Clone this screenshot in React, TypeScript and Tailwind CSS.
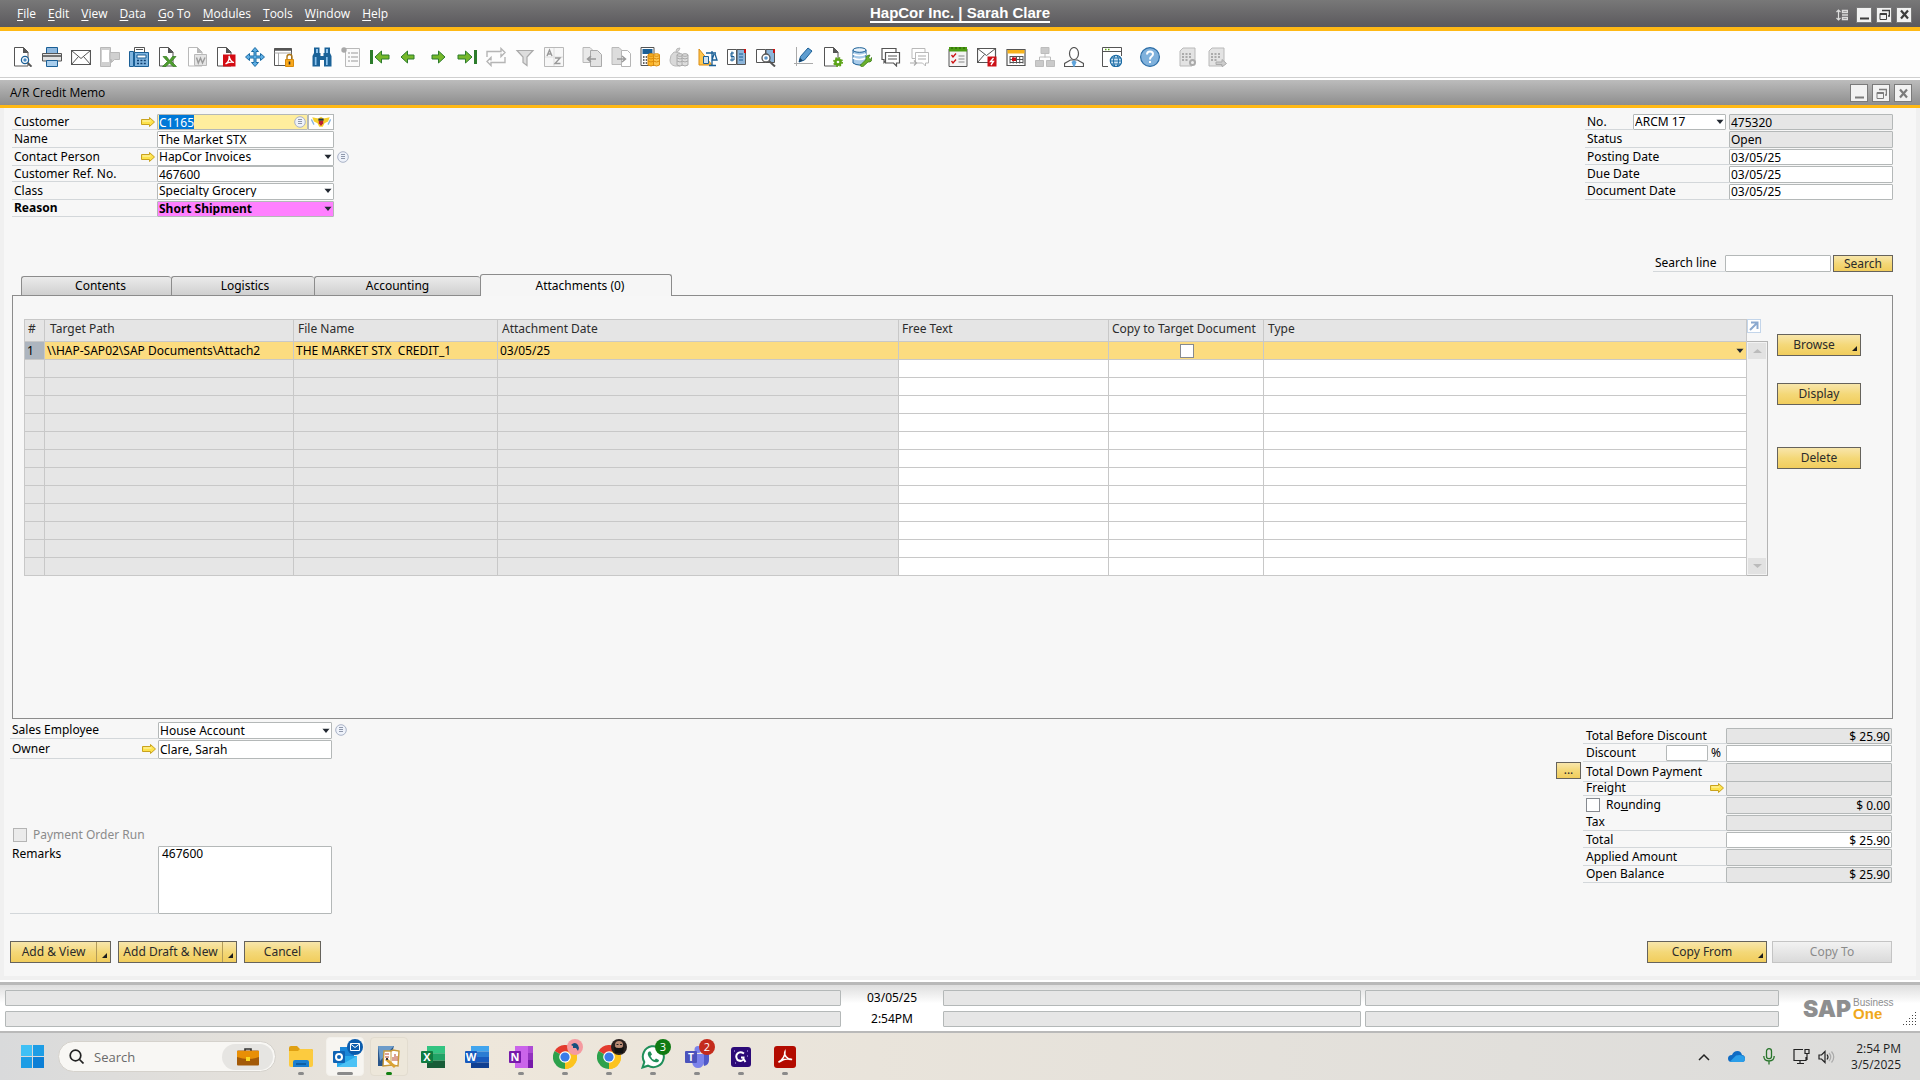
import React, { useEffect, useRef } from "react";

const G = "#b9b9b9";
const D = "#555555";
const B = "#1a5f96";

/* ---------- toolbar drawings, all on a 20 x 20 grid ---------- */

const Page = ({ c = D, f = "#fff" }: { c?: string; f?: string }) => (
  <g>
    <path d="M1.5 .5h9l4.500 4.500v14h-13.500z" fill={f} stroke={c} />
    <path d="M10 0v6h5.500z" fill={c} />
  </g>
);

const Coins = ({ x, c, f }: { x: number; c: string; f: string }) => (
  <g fill={f} stroke={c}>
    <path d={`M${x} 8v10q3 2 6 0v-10z`} />
    <path d={`M${x} 11q3 2 6 0M${x} 14q3 2 6 0`} fill="none" />
    <ellipse cx={x + 3} cy="8" rx="3" ry="1.3" />
  </g>
);

const Arrow = ({ d }: { d: string }) => <path d={d} fill="#76b82a" stroke="#2c7c2c" strokeLinejoin="round" />;

const toolGroups: { name: string; art: React.ReactNode }[][] = [
  [
    { name: "Preview", art: <><Page /><circle cx="12" cy="13" r="3.6" fill="#fff" stroke={B} strokeWidth="1.3" /><circle cx="12" cy="13" r="1.7" fill="#4b8cc4" /><path d="M14.8 16l3.7 3.6" stroke={D} strokeWidth="2" /></> },
    { name: "Print", art: <><path d="M4.5.5h11v6h-11z" fill="#8fb8de" stroke={B} /><path d="M.5 6.500h19v7.500H.5z" fill="#e2e2e2" stroke={D} /><path d="M1 9h18" stroke={D} strokeWidth="1.6" /><path d="M4.5 13.5h11v6h-11z" fill="#a8cdec" stroke={B} /></> },
    { name: "E-mail", art: <><path d="M.5 3.5h19v14H.5z" fill="#fff" stroke={D} strokeWidth="1.2" /><path d="M.5 3.5l9.5 8 9.5-8M.5 17.5l7-8M19.5 17.5l-7-8" fill="none" stroke={D} /></> },
    { name: "SMS", art: <><path d="M.5.5h10v19H.5z" fill="#d0d0d0" stroke={G} /><path d="M2 3h7v12H2z" fill="#fff" /><path d="M10 5.5h9.500v7h-5l-3 3v-3H10z" fill="#d0d0d0" stroke={G} /></> },
    { name: "Fax", art: <><path d="M5.5.5h10v5h-10z" fill="#fff" stroke={D} /><path d="M7 2.5h7" stroke={D} /><path d="M.5 4.5h4v15h-4zM5.5 5.5h14v14h-14z" fill="#7fb4df" stroke={B} /><path d="M8 8h9v3H8z" fill="#fff" stroke={B} /><path d="M8 13.5h9M8 16.5h9" stroke="#0e3f70" strokeWidth="1.4" strokeDasharray="2 1.4" /></> },
    { name: "Export to Excel", art: <><Page /><path d="M5 9.5h3.5l3 4 3-4H18L13.500 14.500l5 5H15l-3.500-3.500-3.500 3.500H4.500l5-5z" fill="#4f9d2e" stroke="#2f7a1c" strokeWidth=".7" /></> },
    { name: "Export to Word", art: <><Page c={G} /><path d="M7.500 7.500h12v11h-12z" fill="#e4e4e4" stroke={G} /><path d="M9.500 10.500l1.800 5.500 2.200-5 2 5 2.500-5.500" fill="none" stroke="#9a9a9a" strokeWidth="1.400" /></> },
    { name: "Export to PDF", art: <><Page /><path d="M7 7.500h12.500v12H7z" fill="#d40b12" /><path d="M9.500 17c3-2 4-5 3.500-8 1 4 2 6 5 6.500-3-.8-6-.3-8.500 1.500z" fill="none" stroke="#fff" strokeWidth="1.200" /></> },
    { name: "Launch Application", art: <path d="M10 .5l3.500 4H11v4.500h4.500V6.500l4 3.500-4 3.500V11H11v4.500h2.500L10 19.500l-3.500-4H9V11H4.500v2.500L.5 10l4-3.500V9H9V4.500H6.500z" fill="#5fb0e6" stroke="#1d6ca5" /> },
    { name: "Lock Screen", art: <><path d="M.5 1.500h17v17H.5z" fill="#fff" stroke={D} /><path d="M.5 2.500h17" stroke={D} strokeWidth="2.500" /><path d="M.5 6h17M4.500 6v12" stroke="#aaa" /><path d="M13 13v-3a2.500 2.500 0 015 0v3" fill="none" stroke="#b07816" strokeWidth="1.400" /><path d="M11.500 12.500h8v7h-8z" fill="#f9a81c" stroke="#d78a0b" /><path d="M15.500 14.500v3" stroke="#333" strokeWidth="1.600" /></> },
  ],
  [
    { name: "Find", art: <><path d="M2 .5h5.500V6h1v3h3V6h1V.5H18V6l1.500 3v10.500H12V13H8v6.500H.5V9L2 6z" fill="#1a6298" /><path d="M4 2h2v4H4zM14 2h2v4h-2zM2.800 10h1.700v8H2.800zM14 10h1.700v8H14z" fill="#8cc3ee" /></> },
    { name: "Add", art: <><path d="M4.500 1.500h14v18h-14z" fill="#fafafa" stroke={G} /><circle cx="3" cy="3" r="2.700" fill="#a8a8a8" /><path d="M7 6h2M10 6h7M7 10h2M10 10h7M7 14h2M10 14h7" stroke={G} strokeWidth="1.300" /></> },
    { name: "First Record", art: <><path d="M1.500 3v14" stroke="#2c7c2c" strokeWidth="3" /><Arrow d="M5 10l6.500-6v4H19v4h-7.500v4z" /></> },
    { name: "Previous Record", art: <Arrow d="M2 10l6.500-6v4H15v4H8.500v4z" /> },
    { name: "Next Record", art: <Arrow d="M17 10l-6.500-6v4H4v4h6.500v4z" /> },
    { name: "Last Record", art: <><path d="M18.500 3v14" stroke="#2c7c2c" strokeWidth="3" /><Arrow d="M15 10L8.500 4v4H1v4h7.500v4z" /></> },
    { name: "Refresh", art: <path d="M1 10V4.500h14v-3l4 4-4 4v-3M19 10v5.500H5v3l-4-4 4-4v3" fill="none" stroke="#b5b5b5" strokeWidth="1.400" /> },
    { name: "Filter", art: <path d="M2 3.500h16l-6 6.500v8.500l-4-3V10z" fill="#ddd" stroke="#aaa" strokeWidth="1.200" /> },
    { name: "Sort", art: <><path d="M.5.5h19v19H.5z" fill="#f7f7f7" stroke={G} /><path d="M10 1v18M1 10h18" stroke="#ddd" /><path d="M3 9l2.500-6L8 9M4 7h3M11 11h5l-5 5.500h5.500" fill="none" stroke="#999" strokeWidth="1.400" /></> },
  ],
  [
    { name: "Base Document", art: <><path d="M1 .5h7l3 3v12H1z" fill="#e9e9e9" stroke={G} /><path d="M8.500 3.500h7l4 4v12h-11z" fill="#e3e3e3" stroke="#aaa" /><path d="M14 12H6M9 9l-3.500 3L9 15" fill="none" stroke="#999" strokeWidth="1.500" /></> },
    { name: "Target Document", art: <><path d="M1 .5h7l3 3v14H1z" fill="#dcdcdc" stroke={G} /><path d="M10.500 3.500h6l3 3v13h-9z" fill="#fff" stroke="#b5b5b5" /><path d="M6 12h8M11 9l3.500 3-3.500 3" fill="none" stroke="#999" strokeWidth="1.500" /></> },
    { name: "Gross Profit", art: <><path d="M1 .5h13v18H1z" fill="#fff" stroke={D} /><path d="M2.500 2h10v5h-10z" fill={B} /><path d="M3 10h6M3 13h6M3 16h6" stroke="#333" strokeWidth="1.600" strokeDasharray="1.500 1.200" /><Coins x={8} c="#dc8d0d" f="#fbb427" /><Coins x={13.5} c="#dc8d0d" f="#fdc650" /></> },
    { name: "Payment Means", art: <><path d="M5 5q-4 3-4 8t5 6h5V6zM7 4q0-3 4-3-1 4-4 4z" fill="#d9d9d9" stroke={G} /><Coins x={8} c="#aaa" f="#ddd" /><Coins x={13} c="#aaa" f="#ddd" /></> },
    { name: "Volume and Weight", art: <><path d="M1 2l13 16H1z" fill="#ffc64f" stroke="#d98b12" /><path d="M5.500 9.500h5v7h-5z" fill="#cfe3f4" stroke={B} /><path d="M8 6h10M14 4v14M11 18.500h7M16 7l-2 6h5l-2-6" fill="none" stroke={B} strokeWidth="1.300" /></> },
    { name: "Transaction Journal", art: <><path d="M.5 2.500h9v15h-9z" fill="#fff" stroke={D} /><path d="M10 2.500h8.500v15H10z" fill="#8db5da" stroke={D} /><path d="M17 2h2v4h-2z" fill="#c11" /><path d="M7 6H4v3.500h3V13H3M5 4.500v10M12 7h4M12 10h4M12 13h4" fill="none" stroke={B} /></> },
    { name: "Journal Preview", art: <><path d="M.5 2.500h9v13h-9z" fill="#fff" stroke={D} /><path d="M10 2.500h8.500v13H10z" fill="#8db5da" stroke={D} /><path d="M17 2h2v4h-2z" fill="#c11" /><circle cx="10" cy="11" r="4" fill="#fff" stroke={D} strokeWidth="1.300" /><circle cx="10" cy="11" r="1.800" fill="#5b95c8" /><path d="M13 14l6 5.500" stroke={D} strokeWidth="2" /></> },
  ],
  [
    { name: "Layout Designer", art: <><path d="M2.500 0v19M0 16.500h19" stroke="#aaa" /><path d="M5 15l1.500-5.500L14 1l4 3-7.500 9z" fill="#5e9dd0" stroke={B} /><path d="M5 15l1-4 3 2.500z" fill="#173f63" /></> },
    { name: "Form Settings", art: <><Page /><circle cx="15" cy="15" r="2.600" fill="#fff" stroke="#5aa315" strokeWidth="2.500" /><circle cx="15" cy="15" r="4.200" fill="none" stroke="#5aa315" strokeWidth="1.600" strokeDasharray="1.700 1.600" /></> },
    { name: "Query Manager", art: <><path d="M1 3v13q6 4 13 0V3z" fill="#a8cbe9" stroke={B} /><ellipse cx="7.500" cy="3" rx="6.500" ry="2.300" fill="#e9f3fb" stroke={B} /><path d="M1 7q6 3 13 0M1 11q6 3 13 0" fill="none" stroke="#fff" strokeWidth="1.600" /><path d="M8 18.500l6-6q-1-4 4-4.500l-1.500 3 2 1.500 1-2q1 5-3.500 4.500l-5.500 5z" fill="#6cb02b" stroke="#3a7d18" strokeWidth=".8" /></> },
    { name: "Messages", art: <><path d="M1 1.500h14v11H6l-3 3v-3H1z" fill="#fff" stroke={D} strokeWidth="1.200" /><path d="M4.500 5.500h14v10.500h-3v3l-3-3h-8z" fill="#fff" stroke={D} strokeWidth="1.200" /><path d="M7 9h9M7 12h9" stroke={D} /></> },
    { name: "Reply", art: <><path d="M2 1.500h13v10H2z" fill="#fff" stroke={G} /><path d="M5.500 5.500h13V16h-3v3l-3-3h-7z" fill="#fff" stroke={G} /><path d="M8 9h8M8 12h8M0 16h6M4 13.500l2.500 2.500L4 18.500" fill="none" stroke="#aaa" strokeWidth="1.200" /></> },
  ],
  [
    { name: "Tasks", art: <><path d="M1 2h18v17.500H1z" fill="#f4f4f4" stroke={D} /><path d="M1 0h18v4.500H1z" fill="#4c9c14" /><path d="M3 1h15" stroke="#235a00" strokeDasharray="2 2" /><path d="M3.500 8l1.500 2 3-3.500M3.500 14l1.500 2 3-3.500" fill="none" stroke="#c11" strokeWidth="1.300" /><path d="M10.500 9h6M10.500 12h6M10.500 15h6" stroke="#888" /></> },
    { name: "Alerts", art: <><path d="M.5 1.500h18v14H.5z" fill="#fff" stroke={D} strokeWidth="1.200" /><path d="M.5 1.500l9 7 9-7M.5 15.500l7-8" fill="none" stroke={D} /><path d="M10.500 9.500h9v10h-9z" fill="#cc1016" /><path d="M16.500 11l-3 3.500h3l-2.500 3.500" fill="none" stroke="#fff" strokeWidth="1.300" /></> },
    { name: "Calendar", art: <><path d="M1 2.500h18v16H1z" fill="#fff" stroke={D} strokeWidth="1.200" /><path d="M1.500 3h17v3.500h-17z" fill="#f7b31b" /><path d="M4 9.500h13M4 12.500h13M4 15.500h13M4 9v7.500M7.200 9v7.500M10.500 9v7.500M13.700 9v7.500M17 9v7.500" stroke={D} /><path d="M6 10.500h4v3.500H6z" fill="#d40b12" /></> },
    { name: "Organization", art: <><path d="M6 .5h8v6H6zM.5 13.500h8v6h-8zM11.500 13.500h8v6h-8z" fill="#cacaca" stroke="#bdbdbd" /><path d="M10 6.500v4M4.500 13v-3h11v3" fill="none" stroke="#bdbdbd" /></> },
    { name: "My Account", art: <><path d="M.5 19.500v-3l6-3.500h7l6 3.500v3z" fill="#fff" stroke={D} strokeWidth="1.200" /><path d="M10 13l2.500 2-2 5h-1l-2-5z" fill="#5ea4dc" /><ellipse cx="10" cy="6.500" rx="4.500" ry="6" fill="#fff" stroke={D} strokeWidth="1.200" /></> },
  ],
  [
    { name: "Browser Access", art: <><path d="M.5.5h19v19H.5z" fill="#fff" /><path d="M6 19.500H.5V.5h19V9M.5 4.500h19" fill="none" stroke={D} /><path d="M3 2.500h1.500M6 2.500h1.500" stroke="#5aa315" strokeWidth="1.500" /><circle cx="14" cy="14" r="5.700" fill="#cfe6f7" stroke="#1d6ca5" strokeWidth="1.200" /><ellipse cx="14" cy="14" rx="2.500" ry="5.700" fill="none" stroke="#1d6ca5" /><path d="M8.500 14h11M9.500 11h9M9.500 17h9" stroke="#1d6ca5" /></> },
  ],
  [
    { name: "Help", art: <><circle cx="10" cy="10" r="9.400" fill="#7fb1dc" stroke="#2c6da6" strokeWidth="1.200" /><path d="M7 7.500q0-3 3-3t3 2.500q0 1.500-1.500 2.500T10 12.500M10 14v2" fill="none" stroke="#fff" strokeWidth="2" /></> },
  ],
  [
    { name: "Server Settings", art: <><path d="M2 4l3-3h12v15l-3 3H2z" fill="#e3e3e3" stroke={G} /><path d="M4 7h9M4 10h9M4 13h7" stroke="#999" strokeDasharray="2 1.500" strokeWidth="1.300" /><circle cx="14.500" cy="15.500" r="2.500" fill="#eee" stroke="#aaa" strokeWidth="2" /></> },
    { name: "Server Send", art: <><path d="M2 4l3-3h12v15l-3 3H2z" fill="#e3e3e3" stroke={G} /><path d="M4 7h9M4 10h9M4 13h7" stroke="#999" strokeDasharray="2 1.500" strokeWidth="1.300" /><path d="M9 15h6v-2.500l4.500 4-4.500 3.500v-2.500H9z" fill="#ccc" stroke="#aaa" /></> },
  ],
];

/* ---------- small shared pieces ---------- */

const LinkArrow = () => (
  <svg width="14" height="10" viewBox="0 0 14 10" className="block shrink-0">
    <path d="M.5 2.500h8v-2l5 4.500-5 4.500v-2h-8z" fill="#fde24a" stroke="#c9a21e" />
    <path d="M1.500 4h8" stroke="#fff6b8" />
  </svg>
);

const LinkButton = ({ label }: { label: string }) => (
  <button type="button" aria-label={label} className="mr-0.5 bg-[#f7f7f7]"><LinkArrow /></button>
);

const ListIcon = () => (
  <svg width="12" height="12" viewBox="0 0 12 12" className="block">
    <circle cx="6" cy="6" r="5.300" fill="#eef2fa" stroke="#a9b2c6" />
    <path d="M4 3.500h4M4 5.500h4M4 7.500h4" stroke="#8f98ab" />
  </svg>
);

const Down = () => (
  <svg width="8" height="5" viewBox="0 0 8 5" className="pointer-events-none absolute top-1/2 right-0.5 -translate-y-1/2">
    <path d="M.3 0h7.400L4 4.500z" fill="#222831" />
  </svg>
);

const box = "block h-full w-full min-w-0 rounded-[1px] border border-[#b4b8b8] px-px leading-none outline-none";

function Field({ id, value = "", gray, right, label }: { id: string; value?: string; gray?: boolean; right?: boolean; label?: string }) {
  return (
    <input
      id={id}
      aria-label={label}
      defaultValue={value}
      readOnly={gray}
      className={`${box} ${gray ? "bg-[#e6e6e6]" : "bg-white"} ${right ? "text-right" : ""}`}
    />
  );
}

function Pick({ id, value, pink, label }: { id: string; value: string; pink?: boolean; label?: string }) {
  return (
    <span className="relative block h-full w-full">
      <select id={id} aria-label={label} className={`${box} appearance-none ${pink ? "bg-[#ff80ff] font-bold" : "bg-white"}`}>
        <option>{value}</option>
      </select>
      <Down />
    </span>
  );
}

function Row({ id, label, labelClass, arrow, bold, extra, children }: {
  id: string; label: React.ReactNode; labelClass: string; arrow?: string; bold?: boolean; extra?: React.ReactNode; children: React.ReactNode;
}) {
  return (
    <div className="flex pt-px">
      <div className={`flex items-center justify-between border-b border-[#d3d7da] ${labelClass}`}>
        <label htmlFor={id} className={`whitespace-nowrap ${bold ? "font-bold" : ""}`}>{label}</label>
        {arrow && <LinkButton label={arrow} />}
        {extra}
      </div>
      <div className="min-w-0 flex-1">{children}</div>
    </div>
  );
}

const gold = "border border-[#66635c] bg-linear-to-b from-[#f8e6ab] via-[#f4d878] to-[#f1cd5c] text-[#2b2b2b]";

const Corner = () => (
  <svg width="5" height="5" viewBox="0 0 5 5" className="absolute right-[3px] bottom-1"><path d="M5 0v5H0z" fill="#1d1d1d" /></svg>
);

function Gold({ children, className, corner, split }: { children: React.ReactNode; className: string; corner?: boolean; split?: boolean }) {
  return (
    <button type="button" className={`flex items-center ${gold} ${className}`}>
      <span className={`flex-1 text-center whitespace-nowrap ${corner && !split ? "pr-2.5" : ""}`}>{children}</span>
      {split && <span className="h-full w-[14px] border-l border-[#b39b58]" />}
      {corner && <Corner />}
    </button>
  );
}

function WinButtons({ size, tone }: { size: string; tone: string }) {
  const cls = `flex items-center justify-center border border-[#7a7a7a] bg-[#f2f2f2] ${size} ${tone}`;
  return (
    <>
      <button type="button" aria-label="Minimize" className={cls}>
        <svg width="11" height="11" viewBox="0 0 11 11"><path d="M1 9.500h9" stroke="currentColor" strokeWidth="2" /></svg>
      </button>
      <button type="button" aria-label="Restore" className={cls}>
        <svg width="11" height="11" viewBox="0 0 11 11" fill="none" stroke="currentColor"><path d="M3 1.500h7.500V7H9" strokeWidth="1.500" /><path d="M1 4.500h6.500v6H1z" /><path d="M1 5h6.500" strokeWidth="2" /></svg>
      </button>
      <button type="button" aria-label="Close" className={cls}>
        <svg width="11" height="11" viewBox="0 0 11 11"><path d="M2 1.500l7 8M9 1.500l-7 8" stroke="currentColor" strokeWidth="2.200" /></svg>
      </button>
    </>
  );
}

/* ---------- attachments table ---------- */

const columns = [
  { t: "#", w: "w-[20px]" },
  { t: "Target Path", w: "w-[249px]" },
  { t: "File Name", w: "w-[204px]" },
  { t: "Attachment Date", w: "w-[401px]" },
  { t: "Free Text", w: "w-[210px]" },
  { t: "Copy to Target Document", w: "w-[155px]" },
  { t: "Type", w: "" },
];

const TypePick = () => (
  <span className="relative block h-4">
    <select aria-label="Type" className="block h-full w-full appearance-none bg-transparent outline-none"><option> </option></select>
    <Down />
  </span>
);

function AttachmentTable() {
  const cell = "h-[18px] border border-[#c8c8c8] p-0 pl-0.5 leading-none whitespace-pre overflow-hidden";
  return (
    <table className="w-full table-fixed border-collapse">
      <thead>
        <tr>
          {columns.map((c, i) => (
            <th key={c.t} scope="col" className={`h-[22px] border border-[#c8c8c8] bg-[#e5e5e5] p-0 text-left font-normal whitespace-nowrap text-[#2c2c2c] ${i === 1 ? "pl-[5px]" : i === 0 || i === 4 || i === 5 ? "pl-[3px]" : "pl-1"} pb-1 ${c.w}`}>{c.t}</th>
          ))}
        </tr>
      </thead>
      <tbody>
        <tr className="bg-[#fcdc80]">
          <td className={`${cell} bg-[#adb5bf]`}>1</td>
          <td className={cell}>{"\\\\HAP-SAP02\\SAP Documents\\Attach2"}</td>
          <td className={cell}>{"THE MARKET STX  CREDIT_1"}</td>
          <td className={cell}>03/05/25</td>
          <td className={cell} />
          <td className={cell}>
            <input type="checkbox" aria-label="Copy to Target Document" className="mx-auto block size-[14px] appearance-none border border-[#868a90] bg-white" />
          </td>
          <td className={cell}><TypePick /></td>
        </tr>
        {Array.from({ length: 12 }, (_, r) => (
          <tr key={r}>
            {columns.map((c, i) => <td key={c.t} className={`${cell} ${i < 4 ? "bg-[#e6e6e6]" : "bg-white"}`} />)}
          </tr>
        ))}
      </tbody>
    </table>
  );
}

/* ---------- taskbar drawings, 24 x 24 ---------- */

const Office = ({ l, c, bars }: { l: string; c: string; bars: string[] }) => (
  <svg width="24" height="24" viewBox="0 0 24 24">
    {bars.map((b, i) => <rect key={i} x="6" y={1 + i * (22 / bars.length)} width="18" height={22 / bars.length} fill={b} />)}
    <rect x="0" y="6" width="12" height="12" rx="1" fill={c} />
    <text x="6" y="16" textAnchor="middle" fontSize="11" fontWeight="700" fill="#fff" fontFamily="Open Sans, sans-serif">{l}</text>
  </svg>
);

const Chrome = () => (
  <svg width="24" height="24" viewBox="0 0 24 24">
    <path d="M12 12L1.600 6A12 12 0 0122.400 6z" fill="#e33b2e" />
    <path d="M12 12l10.400-6A12 12 0 0112 24z" fill="#fcc31e" />
    <path d="M12 12v12A12 12 0 011.600 6z" fill="#2da14c" />
    <path d="M12 6.500h10.600A12 12 0 0112 24l4.800-9.200z" fill="#fcc31e" />
    <circle cx="12" cy="12" r="5.800" fill="#fff" /><circle cx="12" cy="12" r="4.600" fill="#3a7be8" />
  </svg>
);

const Badge = ({ children, className }: { children: React.ReactNode; className: string }) => (
  <span className={`absolute -top-1.5 -right-1.5 flex size-4 items-center justify-center overflow-hidden rounded-full text-[11px] leading-none text-white ${className}`}>{children}</span>
);

const apps: { name: string; art: React.ReactNode; badge?: React.ReactNode; tile?: string; dot?: string }[] = [
  { name: "File Explorer", dot: "w-1.5 bg-[#8a8a8a]", art: <svg width="24" height="24" viewBox="0 0 24 24"><path d="M0 3q0-2 2-2h6l3 3h11q2 0 2 2v14H0z" fill="#e0a012" /><path d="M0 6h9l2-2h11q2 0 2 2v14q0 2-2 2H2q-2 0-2-2z" fill="#fccb3f" /><path d="M4 22v-5q0-2 2-2h12q2 0 2 2v5z" fill="#1b7fd0" /><path d="M7 19h10" stroke="#0b5596" strokeWidth="1.500" /></svg> },
  { name: "Outlook", tile: "border-[#f3f1ec] bg-[#f7f5f1]", dot: "w-4 bg-[#8a8a8a]", badge: <Badge className="bg-[#0b5cad]"><svg width="10" height="8" viewBox="0 0 10 8" fill="none" stroke="#fff"><path d="M.5.5h9v7h-9zM.5 1L5 4.500 9.500 1" /></svg></Badge>, art: <svg width="24" height="24" viewBox="0 0 24 24"><path d="M7 2h14v12H7z" fill="#1a86d8" /><path d="M4 11h20v11H4z" fill="#28a8ea" /><path d="M4 22L24 11v11z" fill="#4cc2f5" /><rect y="6" width="12" height="12" rx="1" fill="#0f64b5" /><circle cx="6" cy="12" r="3" fill="none" stroke="#fff" strokeWidth="2" /></svg> },
  { name: "SAP Business One", tile: "border-[#e2dccf] bg-[#ede7da]", dot: "w-1.5 bg-[#128012]", art: <svg width="24" height="24" viewBox="0 0 24 24"><path d="M1 1h16l-6 20H1z" fill="#2a568a" /><path d="M1 1h16L3 16z" fill="#6d9cc9" /><path d="M7 6h7l2-1 6 1-1 15-6-1-9 1z" fill="#fff" stroke="#c99a3a" strokeWidth="1.400" /><path d="M14 6v14" stroke="#c99a3a" /><path d="M8 9h4M8 12h4M16 12v4M18 9v7M20 11v5" stroke="#b9472c" /><path d="M9 14l9 8" stroke="#dba334" strokeWidth="3" /><path d="M9 14l2 0" stroke="#333" strokeWidth="2" /></svg> },
  { name: "Excel", art: <Office l="X" c="#107c41" bars={["#33c481", "#21a366", "#185c37"]} /> },
  { name: "Word", art: <Office l="W" c="#185abd" bars={["#41a5ee", "#2b7cd3", "#185abd", "#103f91"]} /> },
  { name: "OneNote", dot: "w-1.5 bg-[#8a8a8a]", art: <svg width="24" height="24" viewBox="0 0 24 24"><path d="M6 1h18v22H6z" fill="#ca64ea" /><path d="M19 1h5v7h-5z" fill="#ae4bd5" /><path d="M19 8h5v7h-5z" fill="#9332bf" /><path d="M19 15h5v8h-5z" fill="#7719aa" /><rect y="6" width="12" height="12" rx="1" fill="#7719aa" /><text x="6" y="16" textAnchor="middle" fontSize="11" fontWeight="700" fill="#fff" fontFamily="Open Sans, sans-serif">N</text></svg> },
  { name: "Chrome, first profile", dot: "w-1.5 bg-[#8a8a8a]", art: <Chrome />, badge: <Badge className="bg-[#f59aa0]"><svg width="12" height="12" viewBox="0 0 12 12"><path d="M2 4q4-4 7 0l1 3-1 3-2-3-3 0 0-2z" fill="#17507e" /></svg></Badge> },
  { name: "Chrome, second profile", dot: "w-1.5 bg-[#8a8a8a]", art: <Chrome />, badge: <Badge className="bg-[#2a211f]"><svg width="16" height="16" viewBox="0 0 16 16"><circle cx="8" cy="6" r="4" fill="#b98a74" /><path d="M3 8q5 2 10 0l-1 6H4z" fill="#111" /><path d="M5.500 5.500h2M9 5.500h2" stroke="#222" /></svg></Badge> },
  { name: "WhatsApp", dot: "w-1.5 bg-[#8a8a8a]", badge: <Badge className="bg-[#0f7a12]">3</Badge>, art: <svg width="24" height="24" viewBox="0 0 24 24"><path d="M1.500 22.500l1.800-5.500a10.500 10.500 0 113.700 3.700z" fill="#fff" stroke="#1f8f5a" strokeWidth="2" /><path d="M8 6.500q-3 2 1 7t8 3.500q2-1.500 0-2.500l-2-1-1.500 1.500q-3-1-4-4L11 9.500l-1.500-3z" fill="#1f8f5a" /></svg> },
  { name: "Teams", dot: "w-1.5 bg-[#8a8a8a]", badge: <Badge className="bg-[#c42b1c]">2</Badge>, art: <svg width="24" height="24" viewBox="0 0 24 24"><circle cx="13" cy="4.500" r="3.500" fill="#7b83eb" /><path d="M16 9h8v6q0 5-5 6z" fill="#5059c9" /><path d="M7 9h12v8q-1 6-6 6t-6-6z" fill="#7b83eb" /><rect y="6" width="12" height="12" rx="1" fill="#4b53bc" /><text x="6" y="16" textAnchor="middle" fontSize="10" fontWeight="700" fill="#fff" fontFamily="Open Sans, sans-serif">T</text></svg> },
  { name: "G Hub", dot: "w-1.5 bg-[#8a8a8a]", art: <svg width="20" height="20" viewBox="0 0 20 20"><rect width="20" height="20" rx="3" fill="#2c0a78" /><path d="M13 6.500q-4-2.500-6.500 0t0 6.500q4 2 6-.5V10.500H10M12.500 12l2 3" fill="none" stroke="#fff" strokeWidth="2" /><path d="M3 4h1M16 4h1M4 16h1M16 9h1" stroke="#c9b8ff" /></svg> },
  { name: "Acrobat", dot: "w-1.5 bg-[#8a8a8a]", art: <svg width="22" height="22" viewBox="0 0 22 22"><rect width="22" height="22" rx="3" fill="#b30b00" /><path d="M4.500 16c4-2 7-7 6.500-10.500-1.500 3 2 8.500 7 8-4-1.500-9 0-13 2.500z" fill="none" stroke="#fff" strokeWidth="1.500" /></svg> },
];

const menus = ["File", "Edit", "View", "Data", "Go To", "Modules", "Tools", "Window", "Help"];

const ui = "font-['Noto_Sans',sans-serif]";
const segoe = "font-['Open_Sans','Noto_Sans',sans-serif]";

export default function App() {
  const customer = useRef<HTMLInputElement>(null);
  useEffect(() => {
    customer.current?.focus();
    customer.current?.select();
  }, []);

  const lw = "w-[145px] pl-0.5";
  const tw = "w-[143px] pl-[3px]";
  const pane = "h-4 rounded-[1px] border border-[#b4b8b8] bg-[#e6e6e6]";

  return (
    <div className={`flex min-h-screen flex-col bg-white text-[12px] leading-4 text-black ${ui}`}>
      {/* application bar */}
      <header className="grid h-[31px] grid-cols-[1fr_auto_1fr] items-center border-b-4 border-[#ffb915] bg-linear-to-b from-[#787878] to-[#5b595d]">
        <nav className={`flex gap-3 pl-[17px] text-white ${segoe}`}>
          {menus.map((m) => (
            <button key={m} type="button" className="leading-4"><span className="underline underline-offset-2">{m[0]}</span>{m.slice(1)}</button>
          ))}
        </nav>
        <h1 className="mt-px border-b-2 border-white font-['Liberation_Sans',sans-serif] text-[15px] leading-4 font-bold text-white">HapCor Inc. | Sarah Clare</h1>
        <div className="flex items-center justify-end gap-1 pt-0.5 pr-2">
          <svg width="12" height="12" viewBox="0 0 12 12" className="mr-1" fill="none" stroke="#dcdcdc"><path d="M2.500 1v10M.5 3l2-2 2 2M.5 9l2 2 2-2" strokeWidth="1.200" /><path d="M6.500 1.500h5v2h-5zM6 6h6M6.500 8.500h5v2h-5z" strokeWidth="1.400" /></svg>
          <WinButtons size="h-4 w-4" tone="text-[#3d3d3d]" />
        </div>
      </header>

      {/* toolbar */}
      <div className="mb-0.5 flex h-[47px] items-center gap-[18px] border-b border-[#cfcfcf] bg-[#fdfdfd] pt-[5px] pl-[13px]">
        {toolGroups.map((g, i) => (
          <div key={i} className="flex gap-[9px]">
            {g.map((t) => (
              <button key={t.name} type="button" aria-label={t.name}>
                <svg width="20" height="20" viewBox="0 0 20 20" fill="none" className="block">{t.art}</svg>
              </button>
            ))}
          </div>
        ))}
      </div>

      {/* document window */}
      <div className={`flex h-7 items-center justify-between border-b-[3px] border-[#ffb915] bg-linear-to-b from-[#bcbcbc] to-[#8e8e8e] pt-px pr-2 pl-2.5 ${segoe}`}>
        <h2>A/R Credit Memo</h2>
        <div className="flex gap-1"><WinButtons size="h-[18px] w-[18px]" tone="text-[#7c7c7c]" /></div>
      </div>

      <main className="flex flex-1 flex-col border-x-4 border-b-4 border-[#f0f0f0] bg-[#f7f7f7] pt-[5px] pr-[23px] pb-[13px] pl-1.5">
        <div className="flex items-start justify-between">
          <div className="ml-0.5 grid h-[104px] w-[322px] grid-rows-6">
            <Row id="customer" label="Customer" labelClass={lw} arrow="Open customer">
              <div className="flex h-full">
                <div className="relative flex-1">
                  <input id="customer" ref={customer} defaultValue="C1165" className={`${box} bg-[#ffee9e] selection:bg-[#0078d7] selection:text-white`} />
                  <button type="button" aria-label="Choose customer" className="absolute top-0.5 right-0.5"><ListIcon /></button>
                </div>
                <svg width="26" height="16" viewBox="0 0 26 16" className="border border-[#b4b8b8] bg-white"><path d="M3 2.500l7 1.500 3-2 3 2 7-1.500-2 5-4 2-2 4h-4l-2-4-4-2z" fill="#f6cf2a" /><path d="M10.500 6.500h5v3l-2.500 3-2.500-3z" fill="#b23" /><path d="M10 4h6v2.500h-6z" fill="#234" /><path d="M2 5l3 6M24 5l-3 6" stroke="#8bb7e0" strokeWidth="1.500" /></svg>
              </div>
            </Row>
            <Row id="name" label="Name" labelClass={lw}><Field id="name" value="The Market STX" /></Row>
            <div className="relative grid">
              <Row id="contact" label="Contact Person" labelClass={lw} arrow="Open contact person"><Pick id="contact" value="HapCor Invoices" /></Row>
              <button type="button" aria-label="Contact details" className="absolute top-[3px] left-full ml-[3px]"><ListIcon /></button>
            </div>
            <Row id="ref" label="Customer Ref. No." labelClass={lw}><Field id="ref" value="467600" /></Row>
            <Row id="class" label="Class" labelClass={lw}><Pick id="class" value="Specialty Grocery" /></Row>
            <Row id="reason" label="Reason" labelClass={lw} bold><Pick id="reason" value="Short Shipment" pink /></Row>
          </div>

          <div className="w-[308px]">
            <div className="grid h-[87px] grid-rows-5">
              <Row id="number" label="No." labelClass="w-12 pl-0.5">
                <div className="flex h-full gap-[3px]">
                  <div className="w-[93px]"><Pick id="series" label="Series" value="ARCM 17" /></div>
                  <div className="flex-1"><Field id="number" value="475320" gray /></div>
                </div>
              </Row>
              <Row id="status" label="Status" labelClass="w-36 pl-0.5"><Field id="status" value="Open" gray /></Row>
              <Row id="posting" label="Posting Date" labelClass="w-36 pl-0.5"><Field id="posting" value="03/05/25" /></Row>
              <Row id="due" label="Due Date" labelClass="w-36 pl-0.5"><Field id="due" value="03/05/25" /></Row>
              <Row id="docdate" label="Document Date" labelClass="w-36 pl-0.5"><Field id="docdate" value="03/05/25" /></Row>
            </div>
            <div className="mt-[55px] flex h-[17px] justify-end">
              <label htmlFor="search" className="w-[72px] border-b border-[#d3d7da] pl-0.5">Search line</label>
              <div className="w-[106px]"><Field id="search" /></div>
              <Gold className="ml-0.5 w-[60px]">Search</Gold>
            </div>
          </div>
        </div>

        {/* tabs */}
        <div role="tablist" className="mt-0.5 ml-[11px] flex items-end">
          {([["Contents", "w-[150px] pl-2"], ["Logistics", "w-[143px] pl-1"], ["Accounting", "w-[166px]"]] as const).map(([t, w]) => (
            <button key={t} role="tab" type="button" aria-selected="false" className={`h-[19px] rounded-t-[3px] border-t border-l border-[#8c8c8c] bg-linear-to-b from-[#ebebeb] to-[#d0d0d0] ${w}`}>{t}</button>
          ))}
          <button role="tab" type="button" aria-selected="true" className="relative z-10 -mb-px h-[22px] w-[192px] rounded-t-[3px] border border-b-0 border-[#8c8c8c] bg-[#f6f6f6] pl-2">Attachments (0)</button>
        </div>
        <section className="ml-0.5 flex flex-1 items-start border border-[#8c8c8c] pt-[23px] pr-[31px] pl-[11px]">
          <div className="min-w-0 flex-1"><AttachmentTable /></div>
          <div className="flex w-[21px] flex-col self-stretch">
            <button type="button" aria-label="Expand table" className="mb-2 h-[14px] w-[14px] border border-[#c3d5ea] bg-white">
              <svg width="12" height="12" viewBox="0 0 12 12"><path d="M2 10l7-7M3 2.500h6.500V9" fill="none" stroke="#8ba9cf" strokeWidth="2" /></svg>
            </button>
            <div className="flex h-[235px] flex-col justify-between border border-l-0 border-[#b4b4b4] bg-[#f3f3f3] p-px">
              <button type="button" aria-label="Scroll up" className="flex h-4 items-center justify-center bg-[#e2e2e2]"><svg width="9" height="4" viewBox="0 0 9 4"><path d="M0 4l4.500-4L9 4z" fill="#bbb" /></svg></button>
              <button type="button" aria-label="Scroll down" className="flex h-4 items-center justify-center bg-[#e2e2e2]"><svg width="9" height="4" viewBox="0 0 9 4"><path d="M0 0l4.500 4L9 0z" fill="#bbb" /></svg></button>
            </div>
          </div>
          <div className="ml-[9px] flex flex-col pt-[15px]">
            <Gold corner className="relative h-[22px] w-[84px]">Browse</Gold>
            <Gold className="mt-[27px] h-[22px] w-[84px]">Display</Gold>
            <Gold className="mt-[42px] h-[22px] w-[84px]">Delete</Gold>
          </div>
        </section>

        {/* footer fields */}
        <div className="flex items-start justify-between pr-px">
          <div className="w-[322px] pt-0.5">
            <div className="relative grid h-[18px]">
              <Row id="sales" label="Sales Employee" labelClass="w-[148px] pl-0.5"><Pick id="sales" value="House Account" /></Row>
              <button type="button" aria-label="Sales employee details" className="absolute top-[3px] left-full ml-[3px]"><ListIcon /></button>
            </div>
            <div className="grid h-[18px]">
              <Row id="owner" label="Owner" labelClass="w-[148px] pl-0.5" arrow="Open owner"><Field id="owner" value="Clare, Sarah" /></Row>
            </div>
            <label className="mt-[70px] flex h-4 items-center gap-1.5 pl-[3px] text-[#8b8b8b]">
              <input type="checkbox" disabled className="size-[14px] appearance-none border border-[#b4b4b4] bg-[#ebebeb]" />
              Payment Order Run
            </label>
            <div className="mt-[3px] flex h-[68px]">
              <label htmlFor="remarks" className="w-[148px] border-b border-[#d3d7da] pl-0.5">Remarks</label>
              <textarea id="remarks" defaultValue="467600" className="h-full flex-1 resize-none rounded-[1px] border border-[#b4b8b8] bg-white px-[3px] leading-[14px] outline-none" />
            </div>
          </div>

          <div className="mt-2 grid h-[156px] w-[309px] grid-rows-9">
            <Row id="before" label="Total Before Discount" labelClass={tw}><Field id="before" value="$ 25.90" gray right /></Row>
            <Row id="discount" label="Discount" labelClass={tw} extra={<span className="flex h-full items-center gap-[3px] pr-[5px]"><span className="h-full w-[42px]"><Field id="percent" label="Discount percent" /></span>%</span>}><Field id="discount" /></Row>
            <div className="relative grid">
              <Row id="down" label="Total Down Payment" labelClass={tw}><Field id="down" gray /></Row>
              <Gold className="absolute top-0 right-full mr-0.5 h-[17px] w-[25px]">...</Gold>
            </div>
            <Row id="freight" label="Freight" labelClass={tw} arrow="Open freight"><Field id="freight" gray /></Row>
            <div className="flex pt-px">
              <div className="flex w-[143px] items-center gap-1.5 pl-[3px]">
                <input id="rounding" type="checkbox" className="size-[14px] appearance-none border border-[#868a90] bg-white" />
                <label htmlFor="rounding">Ro<span className="underline">u</span>nding</label>
              </div>
              <div className="flex-1"><Field id="roundvalue" label="Rounding amount" value="$ 0.00" gray right /></div>
            </div>
            <Row id="tax" label="Tax" labelClass={tw}><Field id="tax" gray /></Row>
            <Row id="total" label="Total" labelClass={tw}><Field id="total" value="$ 25.90" right /></Row>
            <Row id="applied" label="Applied Amount" labelClass={tw}><Field id="applied" gray /></Row>
            <Row id="open" label="Open Balance" labelClass={tw}><Field id="open" value="$ 25.90" gray right /></Row>
          </div>
        </div>

        <div className="mt-[27px] flex h-[22px] justify-between pr-px">
          <div className="flex gap-[7px]">
            <Gold corner split className="relative w-[101px]">Add &amp; View</Gold>
            <Gold corner split className="relative w-[119px]">Add Draft &amp; New</Gold>
            <Gold className="w-[77px]">Cancel</Gold>
          </div>
          <div className="flex gap-[5px]">
            <Gold corner className="relative w-[120px]">Copy From</Gold>
            <button type="button" disabled className="w-[120px] border border-[#c4c4c4] bg-linear-to-b from-[#f2f2f2] to-[#dadada] text-[#8b8b8b]">Copy To</button>
          </div>
        </div>
      </main>

      {/* status bar */}
      <footer className="mt-0.5 border-t-[3px] border-b-2 border-[#b9b9b9] bg-linear-to-b from-[#dedede] via-white via-40% to-white">
        <div className="flex items-center pt-[5px] pb-1 pl-[5px]">
          <div className="flex flex-[836] flex-col gap-[5px]"><div className={pane} /><div className={pane} /></div>
          <div className="flex w-[102px] flex-col gap-[5px] text-center"><span>03/05/25</span><span>2:54PM</span></div>
          <div className="flex flex-[418] flex-col gap-[5px]"><div className={pane} /><div className={pane} /></div>
          <div className="ml-1 flex flex-[414] flex-col gap-[5px]"><div className={pane} /><div className={pane} /></div>
          <div className="flex w-[141px] items-center justify-between pr-1 pl-6 font-['Liberation_Sans',sans-serif]">
            <span className="flex items-center gap-0.5 text-[#8e8f90]">
              <span className="font-['Inter','Liberation_Sans',sans-serif] text-[23px] leading-6 font-black">SAP</span>
              <span className="flex flex-col">
                <span className="text-[10px] leading-[9px]">Business</span>
                <span className="text-[15px] leading-[13px] font-bold text-[#f0a81c]">One</span>
              </span>
            </span>
            <svg width="13" height="13" viewBox="0 0 13 13" className="mt-5"><path d="M0 12.500h13M3 9.500h10M6 6.500h7M9 3.500h4M12 .5h1" stroke="#444" strokeDasharray="1 2" /></svg>
          </div>
        </div>
      </footer>

      {/* taskbar */}
      <div className={`flex h-[47px] items-center justify-between bg-linear-to-r from-[#d9dadb] via-[#eee7db] via-25% to-[#dcdcdb] ${segoe}`}>
        <div className="flex items-center pl-[21px]">
          <button type="button" aria-label="Start">
            <svg width="23" height="23" viewBox="0 0 23 23" className="block"><path d="M0 0h11v11H0z" fill="#3fc0f5" /><path d="M12 0h11v11H12zM0 12h11v11H0z" fill="#1d9de5" /><path d="M12 12h11v11H12z" fill="#0c7fd6" /></svg>
          </button>
          <div className="ml-3.5 flex h-[31px] w-[218px] items-center rounded-full border border-[#d5d2cc] bg-[#f8f7f4] pr-0.5 pl-2.5">
            <svg width="15" height="15" viewBox="0 0 15 15" fill="none" stroke="#222" strokeWidth="1.700"><circle cx="6.500" cy="6.500" r="5.300" /><path d="M10.500 10.500l4 4" /></svg>
            <input aria-label="Search" placeholder="Search" className="ml-2.5 w-0 flex-1 bg-transparent text-[13px] outline-none placeholder:text-[#6a6a6a]" />
            <span className="flex h-[26px] w-[51px] items-center justify-center rounded-full bg-[#e6e5e2]">
              <svg width="22" height="18" viewBox="0 0 22 18"><path d="M8 3V1h6v2" fill="none" stroke="#333" strokeWidth="1.600" /><rect y="2.500" width="22" height="15" rx="1" fill="#a35a08" /><path d="M0 3h22v6q-11 4-22 0z" fill="#e88f06" /><rect x="9" y="9" width="4" height="4" fill="#fbd822" /></svg>
            </span>
          </div>
          <div className="ml-[3px] flex">
            {apps.map((a) => (
              <button key={a.name} type="button" aria-label={a.name} className="flex h-11 w-11 items-center justify-center">
                <span className={`relative flex h-[39px] w-[38px] items-center justify-center rounded border ${a.tile ?? "border-transparent"}`}>
                  <span className="relative">{a.art}{a.badge}</span>
                  {a.dot && <span className={`absolute bottom-0 left-1/2 h-[3px] -translate-x-1/2 rounded-full ${a.dot}`} />}
                </span>
              </button>
            ))}
          </div>
        </div>
        <div className="flex items-center pr-[19px] text-[#1f1f1f]">
          <svg width="12" height="8" viewBox="0 0 12 8" className="mr-[18px]" fill="none" stroke="#222" strokeWidth="1.500"><path d="M1 7l5-5 5 5" /></svg>
          <svg width="17" height="12" viewBox="0 0 17 12" className="mr-[18px]"><path d="M4 11q-4 0-4-3.500T4 4q1.500-4 5.500-4Q13 0 14 4q3 0 3 3.500T14 11z" fill="#0f6cc4" /><path d="M2 10.500l6-6q4-1 6 0 3 .5 3 3.500t-3 3H4z" fill="#2a9ee9" /></svg>
          <svg width="12" height="17" viewBox="0 0 12 17" className="mr-[18px]" fill="none" stroke="#27742a" strokeWidth="1.300"><rect x="3.500" y=".7" width="5" height="10" rx="2.500" /><path d="M.8 8q0 5 5.200 5t5.200-5M6 13v3.500" /></svg>
          <svg width="17" height="17" viewBox="0 0 17 17" className="mr-2" fill="none" stroke="#222" strokeWidth="1.200"><path d="M10 1.500H1v11h12V9M7 12.500v3M4 15.500h7M12 1.500h4v4h-4zM14 5.500V12" /></svg>
          <svg width="17" height="14" viewBox="0 0 17 14" className="mr-4" fill="none" stroke="#222" strokeWidth="1.200"><path d="M1 5h2.500L7 1.500v11L3.500 9H1zM9 4.500q2 2.500 0 5" /><path d="M11 3q3.500 4 0 8M13.500 1.500q4.500 5.500 0 11" stroke="#aaa" /></svg>
          <div className="flex flex-col text-right leading-4"><span>2:54 PM</span><span>3/5/2025</span></div>
        </div>
      </div>
    </div>
  );
}
